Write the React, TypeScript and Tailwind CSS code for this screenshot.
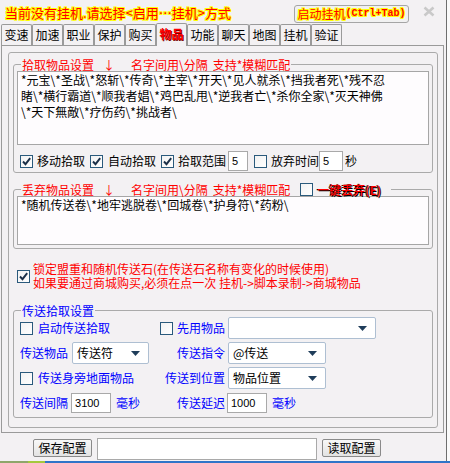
import React from "react";

const glowYellow =
  "[text-shadow:1px_0_0_#ff0,-1px_0_0_#ff0,0_1px_0_#ff0,0_-1px_0_#ff0,1px_1px_0_#ff0,-1px_-1px_0_#ff0,1px_-1px_0_#ff0,-1px_1px_0_#ff0]";
const edgeBlack = "[text-shadow:1px_1px_0_#000,-1px_0_0_#200]";

const tabs = ["变速", "加速", "职业", "保护", "购买", "物品", "功能", "聊天", "地图", "挂机", "验证"];

const pickLines = [
  "*元宝\\*圣战\\*怒斩\\*传奇\\*主宰\\*开天\\*见人就杀\\*挡我者死\\*残不忍",
  "睹\\*横行霸道\\*顺我者娼\\*鸡巴乱甩\\*逆我者亡\\*杀你全家\\*灭天神佛",
  "\\*天下無敵\\*疗伤药\\*挑战者\\",
];
const dropLine = "*随机传送卷\\*地牢逃脱卷\\*回城卷\\*护身符\\*药粉\\";

function Check({ on }: { on?: boolean }) {
  return (
    <span className="w-[13px] h-[13px] shrink-0 border border-[#2a5a7c] bg-gradient-to-br from-[#f2f2f2] to-white flex items-center justify-center">
      {on && (
        <svg width="11" height="11" viewBox="0 0 11 11">
          <path d="M2 5.5 L4.5 8.2 L9.2 2.2" stroke="#1b2f48" strokeWidth="1.9" fill="none" />
        </svg>
      )}
    </span>
  );
}

function Combo({ className, text }: { className: string; text?: string }) {
  return (
    <div
      className={
        "h-[22px] shrink-0 border border-[#aebfd2] rounded-[2px] bg-white flex items-center pl-[4px] pr-[8px] text-black " +
        className
      }
    >
      <span className="flex-1 leading-[14px]">{text}</span>
      <svg width="9" height="5" viewBox="0 0 9 5">
        <path d="M0 0 H9 L4.5 5 Z" fill="#1f3d5a" />
      </svg>
    </div>
  );
}

function NumBox({ className, value }: { className: string; value: string }) {
  return (
    <div
      className={
        "h-[20px] shrink-0 border border-[#a9a9a9] bg-white flex items-center pl-[3px] text-[11px] font-['Liberation_Sans',sans-serif] text-black " +
        className
      }
    >
      {value}
    </div>
  );
}

function Btn({ children }: { children: React.ReactNode }) {
  return (
    <div className="w-[59px] h-[18px] mt-[6px] border border-[#8a8a8a] rounded-[2px] bg-gradient-to-b from-[#f8f8f8] to-[#e3e3e3] flex items-center justify-center leading-[14px]">
      {children}
    </div>
  );
}

export default function App() {
  return (
    <div className="w-[450px] h-[463px] bg-[#fafafa] flex flex-col overflow-hidden font-['Noto_Sans_CJK_SC',sans-serif] text-[12px] text-black">
      <div className="w-[447px] h-[461px] bg-[#f3f1f3] border-r border-[#6e6e6e] flex flex-col">
        {/* title bar */}
        <div className="h-[23px] flex items-start shrink-0">
          <div className={"w-[294px] pl-[5px] pt-[5px] text-[13px] leading-[16px] text-[#f00] " + glowYellow}>
            当前没有挂机.请选择{"<启用…挂机>"}方式
          </div>
          <div className="mt-[5px] w-[115px] h-[18px] border border-[#a5a5a5] rounded-[3px] bg-[#f1f1f1] flex items-center justify-center text-[#f00]">
            <span className={"leading-[14px] " + glowYellow}>启动挂机</span>
            <span className={"font-['Liberation_Mono',monospace] text-[10px] font-bold leading-[14px] " + glowYellow}>
              (Ctrl+Tab)
            </span>
          </div>
          <svg className="ml-[14px] mt-[6px]" width="12" height="11" viewBox="0 0 12 11">
            <path d="M1.5 1.5 L10.5 9.5 M10.5 1.5 L1.5 9.5" stroke="#c9c9c9" strokeWidth="2.6" />
          </svg>
        </div>

        {/* tabs */}
        <div className="h-[23px] -mb-px flex items-end pl-px relative z-10 shrink-0">
          {tabs.map((t) =>
            t === "物品" ? (
              <div
                key={t}
                className="w-[31px] h-[23px] border border-b-0 border-[#9a9a9a] rounded-t-[2px] bg-[#f3f1f3] flex items-start justify-center pt-[3px]"
              >
                <span className="leading-[14px] font-bold text-[#f00] [text-shadow:1px_1px_0_#7a0000]">{t}</span>
              </div>
            ) : (
              <div
                key={t}
                className="w-[31px] h-[21px] mb-px border border-b-0 border-[#9a9a9a] rounded-t-[2px] bg-[#f3f1f3] flex items-center justify-center"
              >
                <span className="leading-[14px]">{t}</span>
              </div>
            )
          )}
        </div>

        {/* tab panel */}
        <div className="ml-px w-[443px] h-[388px] border border-[#9a9a9a] pt-[6px] pl-[6px] shrink-0">
          <div className="w-[430px] h-[376px] border border-[#aaaaaa] rounded-[3px] pl-[4px] pt-[5px]">
            {/* pick group */}
            <fieldset className="w-[420px] border border-[#aaaaaa] rounded-[3px] pb-[1px]">
              <legend className="ml-[7px] px-[1px] leading-[13px] text-[#f00]">
                <span>拾取物品设置</span>
                <span className="ml-[9px]">↓</span>
                <span className="ml-[16px]">名字间用\分隔</span>
                <span className="ml-[5px]">支持*模糊匹配</span>
              </legend>
              <div className="ml-[3px] w-[412px] h-[74px] border border-[#a6a6a6] bg-[#fefcfe] px-[3px] leading-[16px]">
                {pickLines.map((l) => (
                  <div key={l} className="whitespace-nowrap">
                    {l}
                  </div>
                ))}
              </div>
              <div className="mt-[6px] h-[20px] flex items-center pl-[6px]">
                <Check on />
                <span className="ml-[4px] leading-[14px]">移动拾取</span>
                <span className="ml-[5px]">
                  <Check on />
                </span>
                <span className="ml-[5px] leading-[14px]">自动拾取</span>
                <span className="ml-[5px]">
                  <Check on />
                </span>
                <span className="ml-[4px] leading-[14px]">拾取范围</span>
                <NumBox className="ml-[2px] w-[20px]" value="5" />
                <span className="ml-[6px]">
                  <Check />
                </span>
                <span className="ml-[4px] leading-[14px]">放弃时间</span>
                <NumBox className="w-[24px]" value="5" />
                <span className="ml-[2px] leading-[14px]">秒</span>
              </div>
            </fieldset>

            {/* drop group */}
            <fieldset className="mt-[10px] w-[420px] border border-[#aaaaaa] rounded-[3px] pb-[3px]">
              <legend className="ml-[7px] pl-[1px] pr-[10px] leading-[13px] text-[#f00]">
                <span className="flex items-center">
                  <span>丢弃物品设置</span>
                  <span className="ml-[9px]">↓</span>
                  <span className="ml-[16px]">名字间用\分隔</span>
                  <span className="ml-[5px]">支持*模糊匹配</span>
                  <span className="ml-[10px]">
                    <Check />
                  </span>
                  <span className={"ml-[4px] font-medium text-[#f00] " + edgeBlack}>一键丢弃(E)</span>
                </span>
              </legend>
              <div className="ml-[3px] w-[412px] h-[49px] border border-[#a6a6a6] bg-[#fefcfe] px-[3px] leading-[16px]">
                <div className="whitespace-nowrap">{dropLine}</div>
              </div>
            </fieldset>

            {/* lock note */}
            <div className="mt-[13px] flex items-center pl-[4px]">
              <Check on />
              <div className="ml-[3px] leading-[14px] text-[#f00]">
                <div>锁定盟重和随机传送石(在传送石名称有变化的时候使用)</div>
                <div>{"如果要通过商城购买,必须在点一次 挂机->脚本录制->商城物品"}</div>
              </div>
            </div>

            {/* teleport group */}
            <fieldset className="mt-[14px] w-[420px] border border-[#aaaaaa] rounded-[3px] pb-[3px] text-[#0000ff]">
              <legend className="ml-[7px] px-[1px] leading-[13px]">传送拾取设置</legend>

              <div className="h-[22px] flex items-center pl-[6px]">
                <div className="w-[130px] flex items-center">
                  <Check />
                  <span className="ml-[5px] leading-[14px]">启动传送拾取</span>
                </div>
                <div className="w-[75px] flex items-center justify-end">
                  <Check />
                  <span className="ml-[4px] leading-[14px]">先用物品</span>
                </div>
                <Combo className="ml-[3px] w-[148px]" />
              </div>

              <div className="mt-[3px] h-[22px] flex items-center pl-[6px]">
                <div className="w-[130px] flex items-center">
                  <span className="leading-[14px]">传送物品</span>
                  <Combo className="ml-[4px] w-[77px]" text="传送符" />
                </div>
                <div className="w-[75px] flex items-center justify-end">
                  <span className="leading-[14px]">传送指令</span>
                </div>
                <Combo className="ml-[3px] w-[98px]" text="@传送" />
              </div>

              <div className="mt-[3px] h-[22px] flex items-center pl-[6px]">
                <div className="w-[130px] flex items-center">
                  <Check />
                  <span className="ml-[5px] leading-[14px] whitespace-nowrap">传送身旁地面物品</span>
                </div>
                <div className="w-[75px] flex items-center justify-end">
                  <span className="leading-[14px]">传送到位置</span>
                </div>
                <Combo className="ml-[3px] w-[98px]" text="物品位置" />
              </div>

              <div className="mt-[3px] h-[22px] flex items-center pl-[6px]">
                <div className="w-[130px] flex items-center">
                  <span className="leading-[14px]">传送间隔</span>
                  <NumBox className="ml-[3px] w-[40px]" value="3100" />
                  <span className="ml-[5px] leading-[14px]">毫秒</span>
                </div>
                <div className="w-[75px] flex items-center justify-end">
                  <span className="leading-[14px]">传送延迟</span>
                </div>
                <NumBox className="ml-[2px] w-[40px]" value="1000" />
                <span className="ml-[5px] leading-[14px]">毫秒</span>
              </div>
            </fieldset>
          </div>
        </div>

        {/* footer */}
        <div className="flex items-start h-[28px] shrink-0">
          <div className="ml-[33px]">
            <Btn>保存配置</Btn>
          </div>
          <div className="ml-[5px] mt-[5px] w-[220px] h-[22px] border border-[#a9a9a9] bg-white" />
          <div className="ml-[5px]">
            <Btn>读取配置</Btn>
          </div>
        </div>
      </div>

      {/* taskbar sliver */}
      <div className="h-[2px] flex">
        <div className="w-[28px] bg-[#8fa66a]" />
        <div className="w-[17px] bg-[#a4c83c]" />
        <div className="flex-1 bg-[#2f74c8]" />
      </div>
    </div>
  );
}
